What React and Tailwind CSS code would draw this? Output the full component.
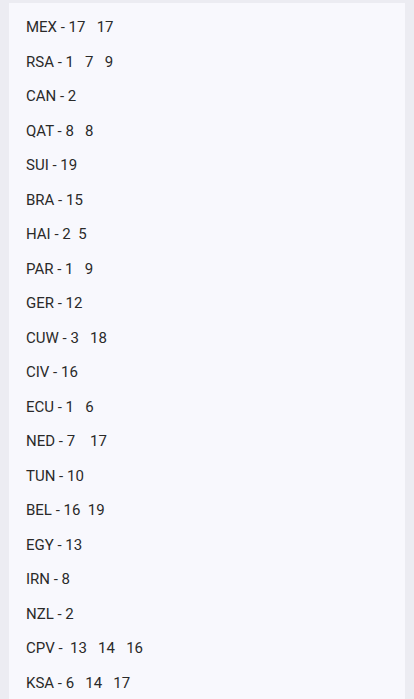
const ROWS = [
  "MEX - 17   17",
  "RSA - 1   7   9",
  "CAN - 2",
  "QAT - 8   8",
  "SUI - 19",
  "BRA - 15",
  "HAI - 2  5",
  "PAR - 1   9",
  "GER - 12",
  "CUW - 3   18",
  "CIV - 16",
  "ECU - 1   6",
  "NED - 7    17",
  "TUN - 10",
  "BEL - 16  19",
  "EGY - 13",
  "IRN - 8",
  "NZL - 2",
  "CPV -  13   14   16",
  "KSA - 6   14   17",
];

export default function App() {
  return (
    <div className="min-h-[699px] w-[414px] bg-[#ececf2] px-[9px] pt-[3px] pb-[2px]" style={{ fontFamily: "Roboto, sans-serif" }}>
      <div className="flex flex-col bg-[#f8f8fd] pt-[7px] min-h-[694px]">
        {ROWS.map((row) => (
          <div key={row} className="flex h-[34.5px] items-center pl-[17px] text-[15px] text-[#2a2a2a] whitespace-pre">
            {row}
          </div>
        ))}
      </div>
    </div>
  );
}
